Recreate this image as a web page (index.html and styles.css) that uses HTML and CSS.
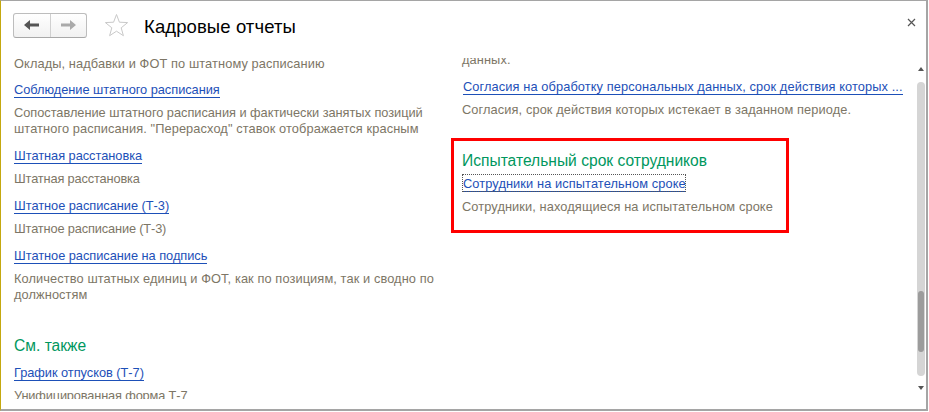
FILE: index.html
```html
<!DOCTYPE html>
<html lang="ru">
<head>
  <meta charset="UTF-8" />
  <title>Кадровые отчеты</title>
  <link rel="stylesheet" href="styles.css">
</head>
<body>
  <div class="window">
    <header class="topbar">
      <div class="nav-btns">
        <button class="nav-btn">
          <svg width="18" height="12" viewBox="0 0 18 12"><path d="M1 6 L7 1 V4.5 H16 V7.5 H7 V11 Z" fill="#555"/></svg>
        </button>
        <button class="nav-btn">
          <svg width="18" height="12" viewBox="0 0 18 12"><path d="M17 6 L11 1 V4.5 H2 V7.5 H11 V11 Z" fill="#aaa"/></svg>
        </button>
      </div>
      <svg class="star" width="25" height="24" viewBox="0 0 25 24"><path d="M12.5 1.5 L15.4 9.2 L23.6 9.6 L17.2 14.8 L19.4 22.7 L12.5 18.2 L5.6 22.7 L7.8 14.8 L1.4 9.6 L9.6 9.2 Z" fill="#fff" stroke="#c9c9c9" stroke-width="1"/></svg>
      <h1>Кадровые отчеты</h1>
      <svg class="close" width="9" height="9" viewBox="0 0 9 9"><path d="M1 1 L8 8 M8 1 L1 8" stroke="#555" stroke-width="1.2" fill="none"/></svg>
    </header>

    <div class="body">
      <div class="columns">
        <div class="col col-left">
          <div class="scroll">
            <p class="desc">Оклады, надбавки и ФОТ по штатному расписанию</p>
            <div class="item">
              <a class="link">Соблюдение штатного расписания</a>
              <p class="desc"><span class="tight">Сопоставление штатного расписания и фактически занятых позиций</span> штатного расписания. "Перерасход" ставок отображается красным</p>
            </div>
            <div class="item">
              <a class="link">Штатная расстановка</a>
              <p class="desc short">Штатная расстановка</p>
            </div>
            <div class="item">
              <a class="link">Штатное расписание (Т-3)</a>
              <p class="desc short">Штатное расписание (Т-3)</p>
            </div>
            <div class="item">
              <a class="link">Штатное расписание на подпись</a>
              <p class="desc">Количество штатных единиц и ФОТ, как по позициям, так и сводно по должностям</p>
            </div>
            <h2>См. также</h2>
            <div class="item first">
              <a class="link">График отпусков (Т-7)</a>
              <p class="desc short">Унифицированная форма Т-7</p>
            </div>
          </div>
        </div>

        <div class="col col-right">
          <div class="scroll">
            <p class="desc">данных.</p>
            <div class="item">
              <a class="link">Согласия на обработку персональных данных, срок действия которых ...</a>
              <p class="desc">Согласия, срок действия которых истекает в заданном периоде.</p>
            </div>
            <div class="marked">
              <h2>Испытательный срок сотрудников</h2>
              <a class="link focused">Сотрудники на испытательном сроке</a>
              <p class="desc">Сотрудники, находящиеся на испытательном сроке</p>
            </div>
          </div>
        </div>
      </div>

      <div class="scrollbar">
        <span class="arrow up"></span>
        <div class="track"><div class="thumb"></div></div>
        <span class="arrow down"></span>
      </div>
    </div>
  </div>
</body>
</html>
```

FILE: styles.css
```css
* {
  box-sizing: border-box;
}

html, body {
  margin: 0;
  height: 100%;
  background: #fff;
}

body {
  font-family: "Liberation Sans", Arial, sans-serif;
  font-size: 12.8px;
}

.window {
  width: 928px;
  height: 411px;
  border-top: 1px solid #a5a5a5;
  border-right: 2px solid #a5a5a5;
  border-bottom: 2px solid #a5a5a5;
  border-left: 1px solid #c4a80f;
  display: flex;
  flex-direction: column;
}

.topbar {
  height: 57px;
  flex: none;
  display: flex;
  align-items: center;
  padding: 0 10px 9px 12px;
}

.nav-btns {
  display: flex;
  width: 74px;
  height: 25px;
  border: 1px solid #bdbdbd;
  border-bottom-color: #a8a8a8;
  border-radius: 3px;
  background: linear-gradient(#fff, #f1f1f1);
}

.nav-btn {
  flex: 1;
  border: none;
  background: none;
  padding: 0;
  display: flex;
  align-items: center;
  justify-content: center;
}

.nav-btn + .nav-btn {
  border-left: 1px solid #d0d0d0;
}

.star {
  margin-left: 17px;
}

h1 {
  margin: 3px 0 0 15px;
  font-size: 18.5px;
  font-weight: normal;
  letter-spacing: 0.1px;
  color: #000;
  flex: 1;
}

.body {
  height: 341px;
  flex: none;
  display: flex;
}

.columns {
  flex: 1;
  display: flex;
}

.col {
  overflow: hidden;
}

.col-left {
  width: 449px;
  padding-left: 13px;
}

.col-right {
  flex: 1;
  padding-left: 1px;
}

.col-left .scroll {
  margin-top: -2px;
  width: 425px;
}

.col-right .scroll {
  margin-top: -6px;
}

.desc {
  margin: 0;
  color: #7d7666;
  line-height: 16px;
  letter-spacing: 0.1px;
}

.desc.short {
  letter-spacing: -0.15px;
}

.tight {
  letter-spacing: -0.03px;
}

.link {
  display: block;
  width: fit-content;
  color: #1d50b8;
  line-height: 14px;
  border-bottom: 1px solid #1d50b8;
  letter-spacing: 0.1px;
}

.col-left .link {
  letter-spacing: -0.03px;
}

.item {
  margin-top: 12px;
}

.col-left .desc + .item {
  margin-top: 11px;
}

.item .desc {
  margin-top: 7px;
}

.item.first {
  margin-top: 9px;
}

h2 {
  margin: 32px 0 0;
  font-size: 15.6px;
  font-weight: normal;
  line-height: 22px;
  color: #00975e;
}

.col-right .scroll > .desc,
.col-right .item {
  padding-left: 11px;
}

.col-right .item .link {
  margin-left: 1px;
}

.marked {
  width: 338px;
  height: 95px;
  margin-top: 20px;
  padding: 9px 8px 0;
  border: 3px solid #ff0000;
}

.marked h2 {
  margin: 0;
}

.focused {
  margin-top: 2px;
  padding: 3px 0 0 1px;
  outline: 1px dotted #555;
  outline-offset: -1px;
}

.marked .desc {
  margin-top: 7px;
}

.scrollbar {
  width: 10px;
  padding-top: 9px;
  display: flex;
  flex-direction: column;
  align-items: center;
}

.arrow {
  width: 0;
  height: 0;
  border-left: 3px solid transparent;
  border-right: 3px solid transparent;
}

.arrow.up {
  border-bottom: 4px solid #555;
}

.arrow.down {
  margin-top: 10px;
  border-top: 4px solid #555;
}

.track {
  width: 8px;
  height: 294px;
  margin-top: 11px;
  border-radius: 4px;
  background: #d5d5d5;
  padding: 209px 1px 0;
}

.thumb {
  height: 61px;
  border-radius: 3px;
  background: #9c9c9c;
}

.close {
  margin-bottom: 6px;
}
```
